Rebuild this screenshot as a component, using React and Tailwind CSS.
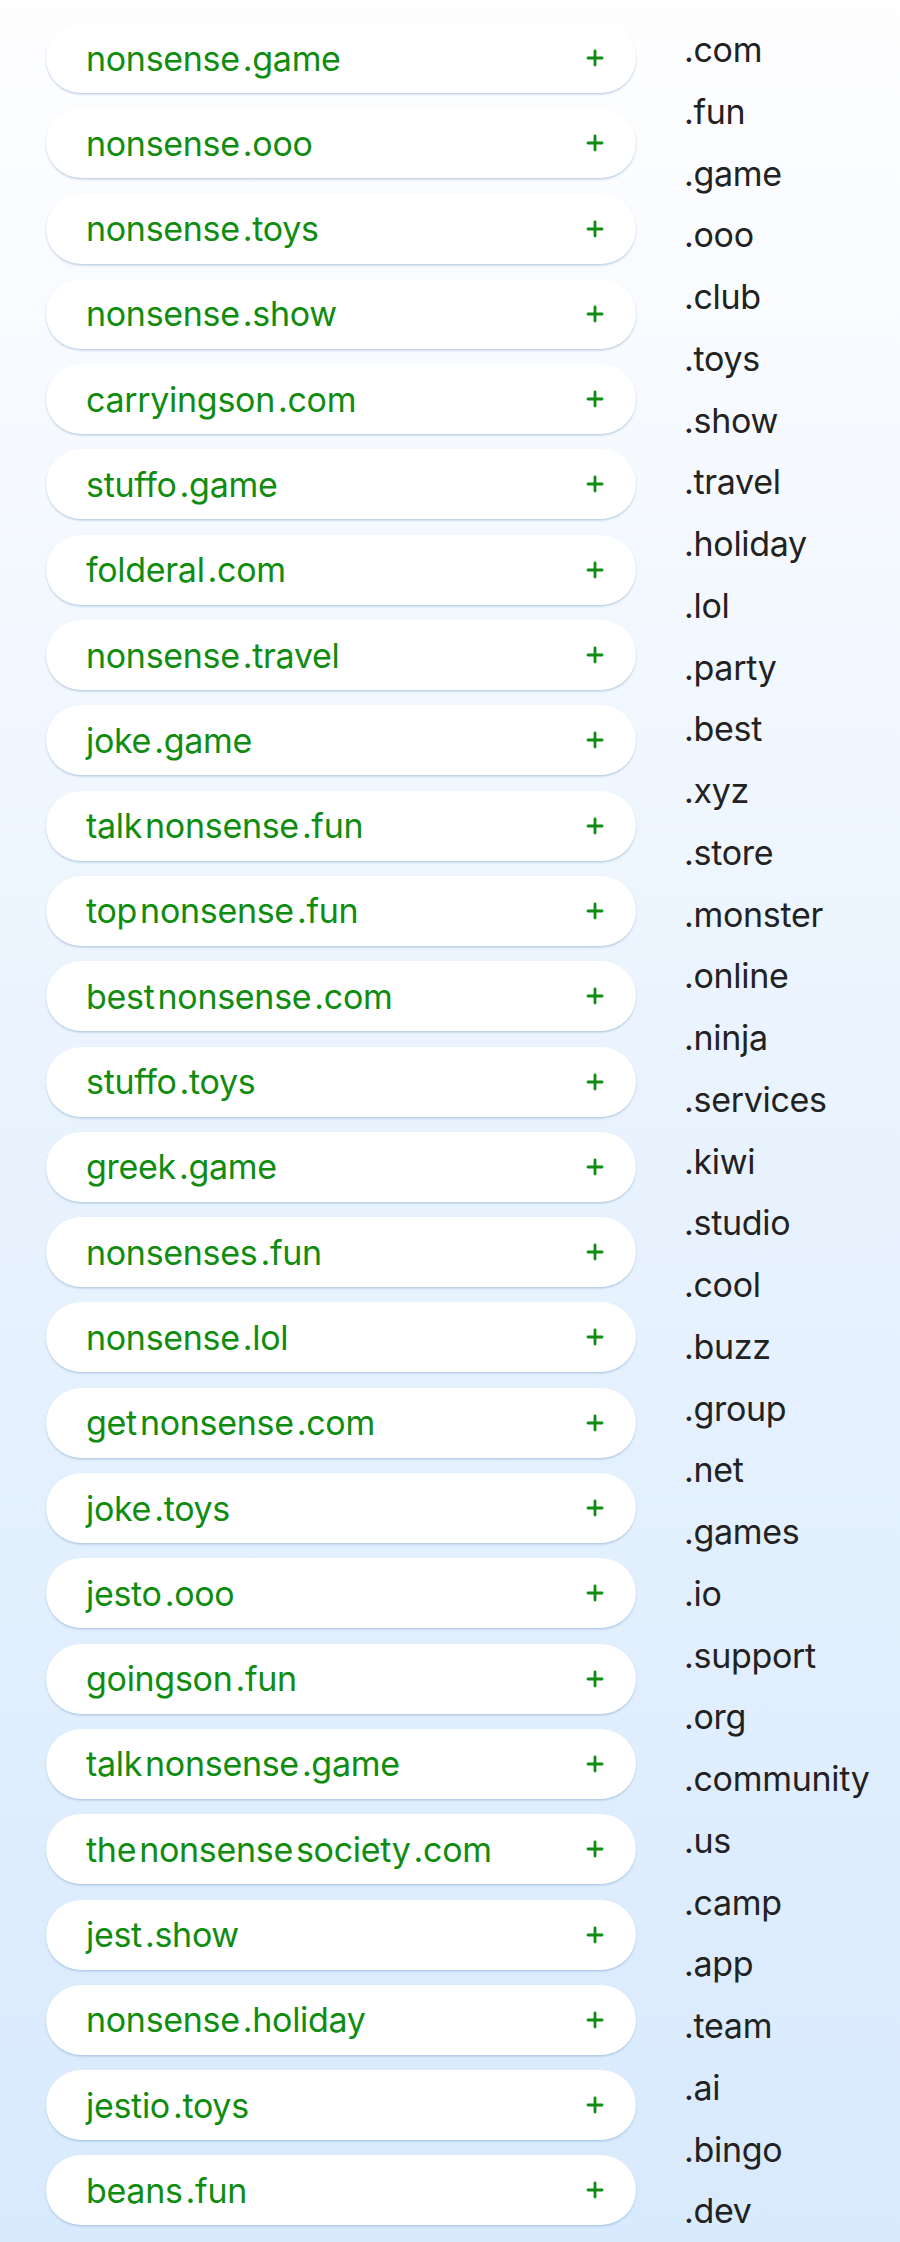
import { Plus } from 'lucide-react';

const domains = [
    ['nonsense', '.game'],
    ['nonsense', '.ooo'],
    ['nonsense', '.toys'],
    ['nonsense', '.show'],
    ['carryingson', '.com'],
    ['stuffo', '.game'],
    ['folderal', '.com'],
    ['nonsense', '.travel'],
    ['joke', '.game'],
    ['talk', 'nonsense', '.fun'],
    ['top', 'nonsense', '.fun'],
    ['best', 'nonsense', '.com'],
    ['stuffo', '.toys'],
    ['greek', '.game'],
    ['nonsenses', '.fun'],
    ['nonsense', '.lol'],
    ['get', 'nonsense', '.com'],
    ['joke', '.toys'],
    ['jesto', '.ooo'],
    ['goingson', '.fun'],
    ['talk', 'nonsense', '.game'],
    ['the', 'nonsense', 'society', '.com'],
    ['jest', '.show'],
    ['nonsense', '.holiday'],
    ['jestio', '.toys'],
    ['beans', '.fun'],
];

const tlds = [
    '.com', '.fun', '.game', '.ooo', '.club', '.toys', '.show', '.travel', '.holiday',
    '.lol', '.party', '.best', '.xyz', '.store', '.monster', '.online', '.ninja',
    '.services', '.kiwi', '.studio', '.cool', '.buzz', '.group', '.net', '.games',
    '.io', '.support', '.org', '.community', '.us', '.camp', '.app', '.team', '.ai',
    '.bingo', '.dev',
];

// pill de suggestion
function DomainPill({ parts }) {
    return (
        <div className="h-[70px] rounded-full bg-white shadow-[0_1.5px_2px_rgba(120,160,200,0.45)] flex items-center justify-between pl-10 pr-[29px]">
            <span className="flex gap-[3px] text-[#108c10]">
                {parts.map((p, i) => (
                    <span key={i}>{p}</span>
                ))}
            </span>
            <Plus className="w-[24px] h-[24px] text-[#108c10]" strokeWidth={2.8} />
        </div>
    );
}

export default function App() {
    return (
        <div
            className="min-h-[2242px] w-[900px] bg-gradient-to-b from-[#fefeff] via-[#e9f3fe] to-[#d8eafd] text-[34px] tracking-[-0.3px]"
            style={{ fontFamily: 'Inter, "Noto Sans", sans-serif' }}
        >
            <div className="flex">
                <div className="w-[590px] ml-[46px] pt-[23px] flex flex-col gap-[15.3px]">
                    {domains.map((d, i) => (
                        <DomainPill key={i} parts={d} />
                    ))}
                </div>
                <div className="ml-[48px] pt-[19px] flex flex-col text-[#222]">
                    {tlds.map((t) => (
                        <div key={t} className="h-[61.75px] leading-[61.75px]">{t}</div>
                    ))}
                </div>
            </div>
        </div>
    );
}
